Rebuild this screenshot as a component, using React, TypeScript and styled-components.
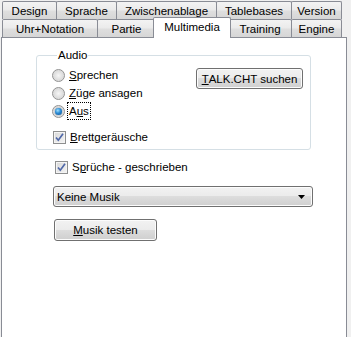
import React, { FC } from 'react';
import styled, { createGlobalStyle } from 'styled-components';

const GlobalStyle = createGlobalStyle`
  html, body {
    margin: 0;
    padding: 0;
    background: #f0f0f0;
    overflow: hidden;
  }
  body {
    font-family: 'Liberation Sans', Arial, sans-serif;
    font-size: 11.5px;
    color: #000;
  }
`;

type TTab = { label: string; width: number; shift?: number; active?: boolean };

const topRow: TTab[] = [
  { label: 'Design', width: 55 },
  { label: 'Sprache', width: 61 },
  { label: 'Zwischenablage', width: 101 },
  { label: 'Tablebases', width: 76 },
  { label: 'Version', width: 51 },
];

const bottomRow: TTab[] = [
  { label: 'Uhr+Notation', width: 96 },
  { label: 'Partie', width: 59 },
  { label: 'Multimedia', width: 78, shift: -3, active: true },
  { label: 'Training', width: 64, shift: -3 },
  { label: 'Engine', width: 51 },
];

const App: FC = () => {
  return (
    <>
      <GlobalStyle />
      <Window>
        <TabRow>
          {topRow.map((t, i) => (
            <Tab key={t.label} $width={t.width} $shift={i === 0 ? 0 : t.shift ?? -1}>{t.label}</Tab>
          ))}
        </TabRow>
        <TabRow>
          {bottomRow.map((t, i) => (
            <Tab
              key={t.label}
              $width={t.width}
              $shift={i === 0 ? 0 : t.shift ?? -1}
              $active={t.active}
            >
              {t.label}
            </Tab>
          ))}
        </TabRow>
        <Panel>
          <Group>
            <Legend>Audio</Legend>
            <GroupBody>
              <Options>
                <Row>
                  <Radio />
                  <Label><u>S</u>prechen</Label>
                </Row>
                <Row>
                  <Radio />
                  <Label><u>Z</u>üge ansagen</Label>
                </Row>
                <Row>
                  <Radio $checked />
                  <Label $focus>A<u>u</u>s</Label>
                </Row>
                <Row $gapTop={8}>
                  <Check />
                  <Label><u>B</u>rettgeräusche</Label>
                </Row>
              </Options>
              <Button $width={107}><u>T</u>ALK.CHT suchen</Button>
            </GroupBody>
          </Group>
          <Lower>
            <Row>
              <Check />
              <Label>S<u>p</u>rüche - geschrieben</Label>
            </Row>
            <Select>
              <span>Keine Musik</span>
              <svg width="7" height="4" viewBox="0 0 7 4">
                <path d="M0 0H7L3.5 4Z" fill="#000" />
              </svg>
            </Select>
            <Button $width={103}><u>M</u>usik testen</Button>
          </Lower>
        </Panel>
      </Window>
    </>
  );
};

const Check: FC = () => (
  <CheckBox>
    <svg width="11" height="11" viewBox="0 0 11 11">
      <path d="M2 5.5L4.3 8.2L9 1.8" fill="none" stroke="#5068a8" strokeWidth="1.7" />
    </svg>
  </CheckBox>
);

const Window = styled.div`
  width: 351px;
  height: 337px;
  padding-top: 1px;
  box-sizing: border-box;
`;

const TabRow = styled.div`
  display: flex;
  align-items: flex-end;
  height: 18px;
  padding-left: 2px;
`;

const Tab = styled.div<{ $width: number; $shift: number; $active?: boolean }>`
  box-sizing: border-box;
  width: ${p => p.$width}px;
  margin-left: ${p => p.$shift}px;
  height: ${p => (p.$active ? 21 : 18)}px;
  margin-bottom: ${p => (p.$active ? -1 : 0)}px;
  border: 1px solid #898c95;
  border-bottom: none;
  border-radius: 2px 2px 0 0;
  background: ${p =>
    p.$active ? '#fff' : 'linear-gradient(#f3f3f3 0%, #ebebeb 45%, #dedede 55%, #d6d6d6 100%)'};
  position: relative;
  z-index: ${p => (p.$active ? 2 : 0)};
  display: flex;
  align-items: center;
  justify-content: center;
  padding-bottom: ${p => (p.$active ? 2 : 0)}px;
  white-space: nowrap;
`;

const Panel = styled.div`
  box-sizing: border-box;
  position: relative;
  z-index: 1;
  margin-left: 1px;
  width: 346px;
  height: 310px;
  border: 1px solid #898c95;
  background: #fff;
  padding: 11px 0 0 34px;
`;

const Group = styled.fieldset`
  box-sizing: border-box;
  width: 275px;
  height: 101px;
  margin: 0;
  padding: 0 7px 0 15px;
  border: 1px solid #d5dfe5;
  border-radius: 3px;
`;

const Legend = styled.legend`
  padding: 0 1px;
  margin-left: 5px;
  line-height: 13px;
`;

const GroupBody = styled.div`
  display: flex;
  align-items: flex-start;
  justify-content: space-between;
  padding-top: 4px;
`;

const Options = styled.div`
  display: flex;
  flex-direction: column;
`;

const Row = styled.div<{ $gapTop?: number }>`
  display: flex;
  align-items: center;
  height: 18px;
  margin-top: ${p => p.$gapTop ?? 0}px;
`;

const Radio = styled.span<{ $checked?: boolean }>`
  box-sizing: border-box;
  width: 13px;
  height: 13px;
  border-radius: 50%;
  border: 1px solid #929292;
  background: radial-gradient(circle at 50% 50%, #f6f6f6 0%, #dcdcdc 60%, #e8e8e8 100%);
  display: flex;
  align-items: center;
  justify-content: center;
  margin-right: 3px;
  &::after {
    content: '';
    display: ${p => (p.$checked ? 'block' : 'none')};
    width: 7px;
    height: 7px;
    border-radius: 50%;
    background: radial-gradient(circle at 40% 35%, #9fe1ff 0%, #2a8ad4 45%, #0a4f8f 100%);
    box-shadow: 0 0 1px #0a3a6a;
  }
`;

const CheckBox = styled.span`
  box-sizing: border-box;
  width: 13px;
  height: 13px;
  border: 1px solid #8e8f8f;
  background: linear-gradient(135deg, #d8d8d8 0%, #f4f4f4 100%);
  box-shadow: inset 0 0 0 1px #f4f4f4;
  display: flex;
  align-items: center;
  justify-content: center;
  margin: 0 3px 0 1px;
  svg {
    display: block;
  }
`;

const Label = styled.span<{ $focus?: boolean }>`
  line-height: 14px;
  padding: 1px 1px;
  outline: ${p => (p.$focus ? '1px dotted #000' : 'none')};
  u {
    text-decoration-thickness: 1px;
    text-underline-offset: 1px;
  }
`;

const Button = styled.div<{ $width: number }>`
  box-sizing: border-box;
  width: ${p => p.$width}px;
  height: 21px;
  margin-top: 2px;
  border: 1px solid #707070;
  border-radius: 3px;
  box-shadow: inset 0 0 0 1px #fcfcfc;
  background: linear-gradient(#f2f2f2 0%, #ebebeb 50%, #dddddd 50%, #cfcfcf 100%);
  display: flex;
  align-items: center;
  justify-content: center;
  u {
    text-decoration-thickness: 1px;
    text-underline-offset: 1px;
  }
`;

const Lower = styled.div`
  display: flex;
  flex-direction: column;
  align-items: flex-start;
  padding: 8px 0 0 17px;

  & > ${Row} {
    margin-left: 1px;
  }
  & > ${Button} {
    margin: 12px 0 0 1px;
    height: 22px;
  }
`;

const Select = styled.div`
  box-sizing: border-box;
  width: 260px;
  height: 21px;
  margin-top: 10px;
  border: 1px solid #707070;
  border-radius: 3px;
  box-shadow: inset 0 0 0 1px #fcfcfc;
  background: linear-gradient(#f2f2f2 0%, #ebebeb 50%, #dddddd 50%, #cfcfcf 100%);
  display: flex;
  align-items: center;
  justify-content: space-between;
  padding: 0 7px 0 3px;
`;

export default App;
